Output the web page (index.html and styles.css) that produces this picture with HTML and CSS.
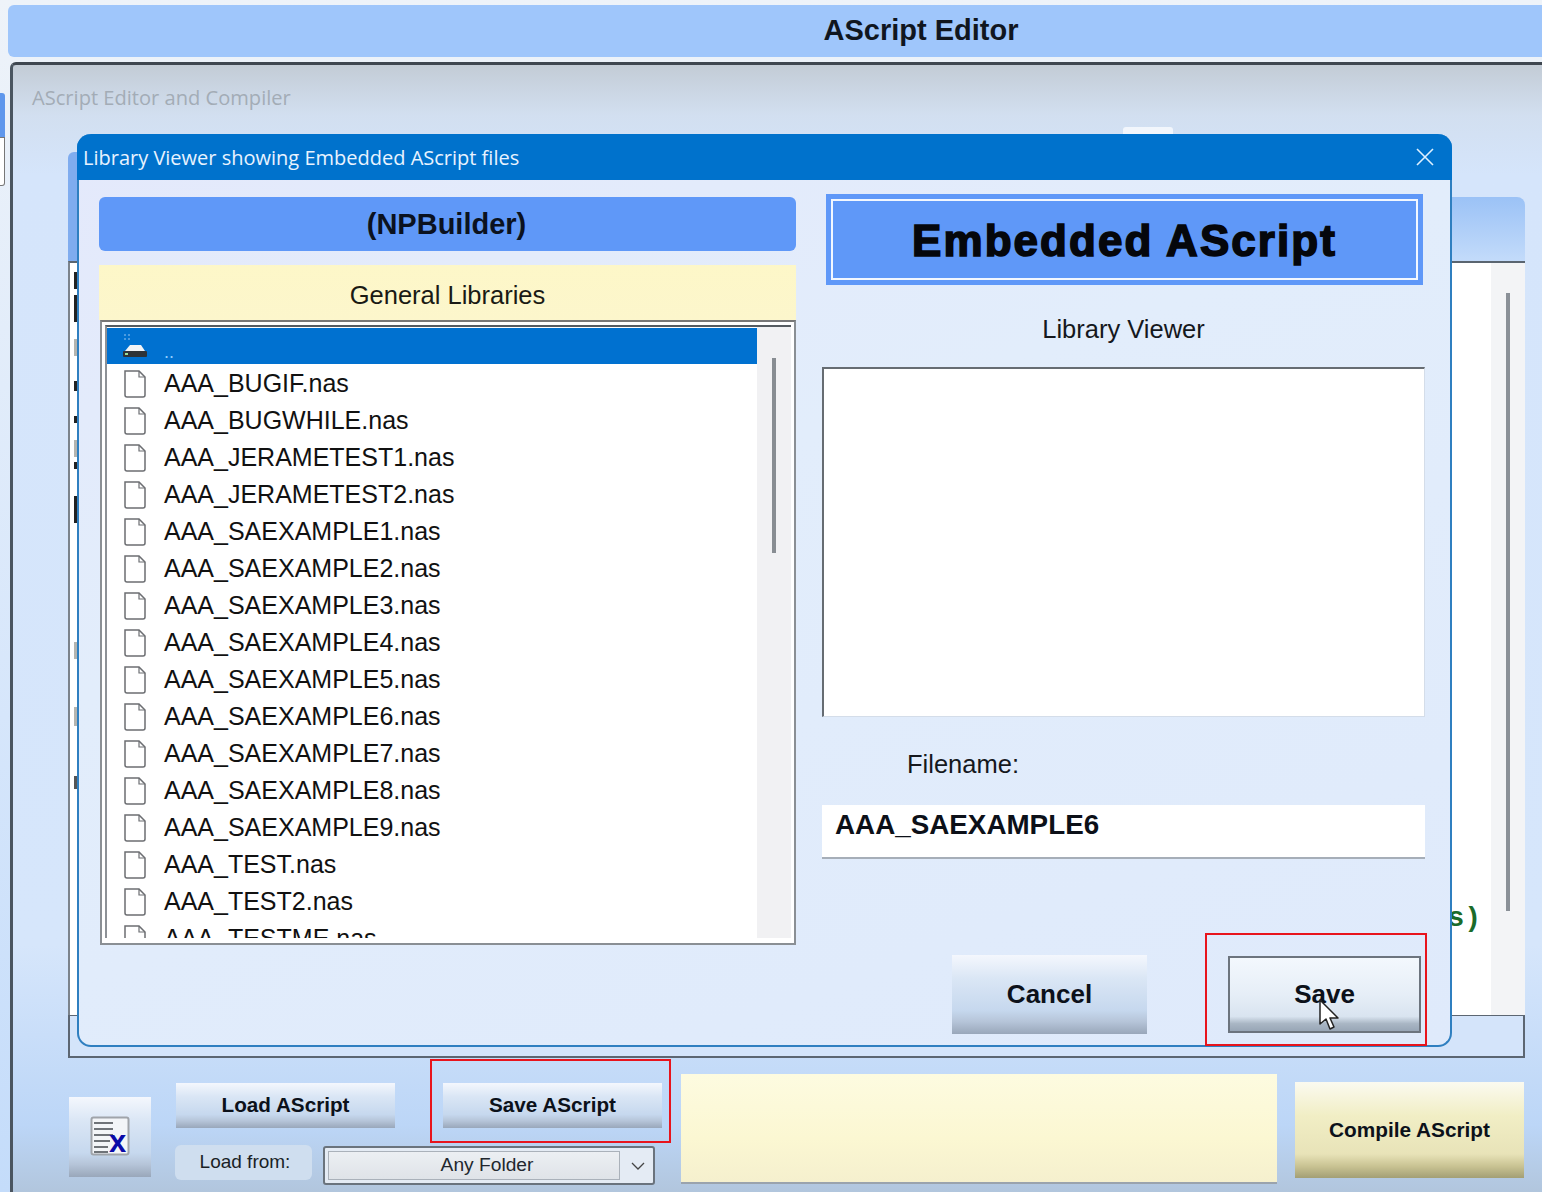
FILE: index.html
```html
<!DOCTYPE html>
<html lang="en">
<head>
  <meta charset="UTF-8">
  <title>AScript Editor</title>
  <link rel="stylesheet" href="styles.css">
</head>
<body>
  <div class="side-tab"></div>
  <div class="side-white"></div>

  <header class="titlebar"><span>AScript Editor</span></header>

  <div class="app">
    <div class="caption">AScript Editor and Compiler</div>

    <div class="tab-white"></div>
    <div class="tab-blue"></div>

    <section class="editor">
      <div class="editor-head"></div>
      <div class="editor-body">
        <div class="code-marks">
          <i></i><i></i><i></i><i></i><i></i><i></i><i></i><i></i><i></i><i></i><i></i>
        </div>
        <div class="code-end">s)</div>
        <div class="editor-scroll"></div>
      </div>
      <div class="editor-foot"></div>
    </section>

    <div class="toolbar">
      <button class="btn btn-icon" aria-label="Clear">
        <svg width="42" height="46" viewBox="0 0 42 46">
          <rect x="2.5" y="3.5" width="37" height="37" rx="2" fill="#f3f5f8" stroke="#a0a4aa" stroke-width="2"/>
          <path d="M5 9h19M5 15h19M5 21h19M5 27h16M5 33h14M5 38h14" stroke="#6f7378" stroke-width="2"/>
          <text x="20" y="38" class="icon-x">x</text>
        </svg>
      </button>

      <div class="load-save">
        <div class="load-save-row">
          <button class="btn btn-wide">Load AScript</button>
          <button class="btn btn-wide">Save AScript</button>
        </div>
        <div class="load-from">
          <span class="load-label">Load from:</span>
          <div class="combo">
            <span class="combo-value">Any Folder</span>
            <svg class="combo-arrow" width="14" height="8" viewBox="0 0 14 8"><path d="M1 1l6 6 6-6" fill="none" stroke="#444" stroke-width="1.3"/></svg>
          </div>
        </div>
      </div>

      <div class="status-panel"></div>
      <button class="btn btn-compile">Compile AScript</button>
    </div>
  </div>

  <div class="dialog">
    <div class="dialog-title">
      <span>Library Viewer showing Embedded AScript files</span>
      <svg width="18" height="18" viewBox="0 0 18 18"><path d="M1 1l16 16M17 1L1 17" stroke="#dff1ff" stroke-width="1.6"/></svg>
    </div>

    <div class="dialog-body">
      <div class="col-left">
        <div class="np-head">(NPBuilder)</div>
        <div class="lib-head">General Libraries</div>
        <div class="file-box">
          <div class="file-inner">
            <ul class="file-list">
              <li class="file selected">
                <svg class="file-icon" width="26" height="28" viewBox="0 0 26 28">
                  <path d="M3 19l5-6h11l4 6z" fill="#f2f4f6"/>
                  <rect x="1" y="19" width="24" height="6" rx="1" fill="#2e3338"/>
                  <rect x="3" y="21" width="3" height="2" fill="#9adf9a"/>
                  <path d="M2 2h2v2H2zM6 2h2v2H6zM2 6h2v2H2zM6 6h2v2H6z" fill="#4b9be0"/>
                </svg>
                <span class="dots">..</span>
              </li>
              <li class="file"><svg class="file-icon" width="26" height="28" viewBox="0 0 26 28"><use href="#doc"/></svg>AAA_BUGIF.nas</li>
              <li class="file"><svg class="file-icon" width="26" height="28" viewBox="0 0 26 28"><use href="#doc"/></svg>AAA_BUGWHILE.nas</li>
              <li class="file"><svg class="file-icon" width="26" height="28" viewBox="0 0 26 28"><use href="#doc"/></svg>AAA_JERAMETEST1.nas</li>
              <li class="file"><svg class="file-icon" width="26" height="28" viewBox="0 0 26 28"><use href="#doc"/></svg>AAA_JERAMETEST2.nas</li>
              <li class="file"><svg class="file-icon" width="26" height="28" viewBox="0 0 26 28"><use href="#doc"/></svg>AAA_SAEXAMPLE1.nas</li>
              <li class="file"><svg class="file-icon" width="26" height="28" viewBox="0 0 26 28"><use href="#doc"/></svg>AAA_SAEXAMPLE2.nas</li>
              <li class="file"><svg class="file-icon" width="26" height="28" viewBox="0 0 26 28"><use href="#doc"/></svg>AAA_SAEXAMPLE3.nas</li>
              <li class="file"><svg class="file-icon" width="26" height="28" viewBox="0 0 26 28"><use href="#doc"/></svg>AAA_SAEXAMPLE4.nas</li>
              <li class="file"><svg class="file-icon" width="26" height="28" viewBox="0 0 26 28"><use href="#doc"/></svg>AAA_SAEXAMPLE5.nas</li>
              <li class="file"><svg class="file-icon" width="26" height="28" viewBox="0 0 26 28"><use href="#doc"/></svg>AAA_SAEXAMPLE6.nas</li>
              <li class="file"><svg class="file-icon" width="26" height="28" viewBox="0 0 26 28"><use href="#doc"/></svg>AAA_SAEXAMPLE7.nas</li>
              <li class="file"><svg class="file-icon" width="26" height="28" viewBox="0 0 26 28"><use href="#doc"/></svg>AAA_SAEXAMPLE8.nas</li>
              <li class="file"><svg class="file-icon" width="26" height="28" viewBox="0 0 26 28"><use href="#doc"/></svg>AAA_SAEXAMPLE9.nas</li>
              <li class="file"><svg class="file-icon" width="26" height="28" viewBox="0 0 26 28"><use href="#doc"/></svg>AAA_TEST.nas</li>
              <li class="file"><svg class="file-icon" width="26" height="28" viewBox="0 0 26 28"><use href="#doc"/></svg>AAA_TEST2.nas</li>
              <li class="file"><svg class="file-icon" width="26" height="28" viewBox="0 0 26 28"><use href="#doc"/></svg>AAA_TESTME.nas</li>
            </ul>
            <div class="file-scroll"><div class="file-thumb"></div></div>
          </div>
        </div>
      </div>

      <div class="col-right">
        <div class="embed-head"><div class="embed-inner">Embedded AScript</div></div>
        <div class="viewer-label">Library Viewer</div>
        <div class="viewer"></div>
        <div class="filename-label">Filename:</div>
        <div class="filename">AAA_SAEXAMPLE6</div>
        <div class="dialog-actions">
          <button class="btn btn-dialog">Cancel</button>
          <button class="btn btn-dialog btn-focus">Save</button>
        </div>
      </div>
    </div>
  </div>

  <div class="mark mark-save"></div>
  <div class="mark mark-toolbar"></div>

  <svg class="cursor" width="24" height="32" viewBox="0 0 24 32">
    <path d="M2 1v24l6-5 4 10 4-2-4-9h8z" fill="#fff" stroke="#222" stroke-width="1.5" stroke-linejoin="round"/>
  </svg>

  <svg width="0" height="0" class="defs">
    <symbol id="doc" viewBox="0 0 26 28">
      <path d="M3 1h14l6 6v18a2 2 0 0 1-2 2H5a2 2 0 0 1-2-2z" fill="#fff" stroke="#6c6e72" stroke-width="1.5"/>
      <path d="M17 1v6h6" fill="none" stroke="#6c6e72" stroke-width="1.2"/>
    </symbol>
  </svg>
</body>
</html>
```

FILE: styles.css
```css
* {
  box-sizing: border-box;
}
html, body {
  margin: 0;
  height: 1192px;
  overflow: hidden;
}
body {
  position: relative;
  padding-top: 5px;
  font-family: "Liberation Sans", Arial, sans-serif;
  color: #000;
  background: linear-gradient(to bottom, #eef3f9 0, #d6e6fb 60%, #c4dcfa 100%);
}
button {
  font-family: inherit;
  border: none;
  padding: 0;
}

/* window title */
.titlebar {
  height: 52px;
  margin-left: 8px;
  border-radius: 6px 0 0 6px;
  background: #9fc6fb;
  display: flex;
  align-items: center;
  justify-content: center;
  padding: 0 8px 2px 300px;
  font-size: 29px;
  font-weight: bold;
  color: #10161f;
}
.side-tab {
  position: absolute;
  left: 0;
  top: 93px;
  width: 5px;
  height: 44px;
  background: #5f97ec;
  border-radius: 0 3px 0 0;
}
.side-white {
  position: absolute;
  left: 0;
  top: 137px;
  width: 5px;
  height: 49px;
  background: #fff;
  border: 1px solid #777;
  border-left: none;
  border-radius: 0 0 3px 0;
}

/* main window */
.app {
  position: relative;
  height: 1130px;
  margin-top: 5px;
  margin-left: 10px;
  padding-left: 55px;
  border-top: 3px solid #3f4750;
  border-left: 3px solid #4a5560;
  border-top-left-radius: 6px;
  background: linear-gradient(to bottom, #c3ccd6 0, #d2dff0 50px, #d5e5fb 110px, #d6e6fb 880px, #bcd6f7 1060px, #b1c5dc 1130px);
}
.caption {
  height: 132px;
  padding-top: 19px;
  margin-left: -36px;
  font-family: "Open Sans", sans-serif;
  font-size: 20.1px;
  color: #a3acb6;
}
.tab-white {
  position: absolute;
  left: 1110px;
  top: 62px;
  width: 50px;
  height: 10px;
  background: #f2f6fc;
  border-radius: 3px 3px 0 0;
}
.tab-blue {
  position: absolute;
  left: 55px;
  top: 87px;
  width: 12px;
  height: 110px;
  background: #7facef;
  border-radius: 6px 0 0 0;
}

/* editor behind the dialog */
.editor {
  width: 1457px;
  height: 861px;
  display: flex;
  flex-direction: column;
}
.editor-head {
  height: 64px;
  border-radius: 0 8px 0 0;
  background: linear-gradient(to bottom, #9bc2f6, #c3dbfa);
}
.editor-body {
  position: relative;
  flex: 1;
  background: #fff;
  border-top: 2px solid #5a6570;
  border-left: 2px solid #7b838c;
}
.editor-foot {
  height: 43px;
  background: #d4e4fa;
  border: 2px solid #5c6672;
  border-top-width: 1px;
}
.code-marks {
  padding-left: 4px;
}
.code-marks i {
  display: block;
  width: 3px;
  background: #222;
}
.code-marks i:nth-child(1) { margin-top: 9px; height: 17px; }
.code-marks i:nth-child(2) { margin-top: 6px; height: 27px; }
.code-marks i:nth-child(3) { margin-top: 17px; height: 17px; background: #b5b5b0; }
.code-marks i:nth-child(4) { margin-top: 25px; height: 10px; }
.code-marks i:nth-child(5) { margin-top: 25px; height: 7px; }
.code-marks i:nth-child(6) { margin-top: 17px; height: 17px; background: #b5b5b0; }
.code-marks i:nth-child(7) { margin-top: 5px; height: 7px; }
.code-marks i:nth-child(8) { margin-top: 27px; height: 27px; }
.code-marks i:nth-child(9) { margin-top: 119px; height: 17px; background: #b5b5b0; }
.code-marks i:nth-child(10) { margin-top: 48px; height: 19px; background: #b5b5b0; }
.code-marks i:nth-child(11) { margin-top: 50px; height: 13px; background: #555; }
.code-end {
  position: absolute;
  right: 44px;
  top: 640px;
  font-family: "Liberation Mono", monospace;
  font-weight: bold;
  font-size: 28px;
  color: #1b6b2a;
}
.editor-scroll {
  position: absolute;
  right: 0;
  top: 0;
  bottom: 0;
  width: 34px;
  background: #f3f4f6;
}
.editor-scroll::after {
  content: "";
  position: absolute;
  left: 15px;
  top: 30px;
  height: 618px;
  width: 4px;
  background: #8a9097;
}

/* bottom toolbar */
.toolbar {
  display: flex;
  align-items: flex-start;
  margin-left: 1px;
  height: 128px;
  padding-top: 16px;
}
.btn {
  display: block;
  flex: none;
  font-weight: bold;
  color: #0c111a;
  background: linear-gradient(to bottom, #f4f7fd 0, #dae6f5 30%, #c6d8ee 70%, #b6c5d9 84%, #99a7ba 100%);
}
.btn-icon {
  width: 82px;
  height: 80px;
  margin-top: 23px;
  padding-left: 20px;
  display: flex;
  align-items: center;
}
.icon-x {
  font-family: "Liberation Sans", sans-serif;
  font-weight: bold;
  font-size: 31px;
  fill: #0a0aa8;
}
.load-save {
  flex: none;
  margin-left: 25px;
  width: 486px;
}
.load-save-row {
  display: flex;
  gap: 48px;
  margin-top: 9px;
}
.btn-wide {
  width: 219px;
  height: 45px;
  padding-bottom: 2px;
  font-size: 20.7px;
}
.load-from {
  display: flex;
  align-items: flex-start;
  margin-top: 18px;
}
.load-label {
  width: 137px;
  height: 35px;
  margin-left: -1px;
  margin-top: -1px;
  padding-left: 3px;
  border-radius: 6px;
  background: #cfdeef;
  text-align: center;
  font-size: 19px;
  line-height: 33px;
  color: #1a1f26;
}
.combo {
  flex: none;
  width: 332px;
  height: 39px;
  margin-left: 11px;
  padding: 3px 33px 3px 3px;
  position: relative;
  border: 2px solid #6a737d;
  border-radius: 3px;
  background: #e4ebf4;
}
.combo-value {
  display: block;
  height: 100%;
  padding-left: 26px;
  text-align: center;
  font-size: 19.2px;
  line-height: 25px;
  color: #22272e;
  border: 1px solid #aab1ba;
  background: linear-gradient(to bottom, #eceff3, #dfe3e8);
}
.combo-arrow {
  position: absolute;
  right: 8px;
  top: 14px;
}
.status-panel {
  flex: none;
  width: 596px;
  height: 110px;
  margin-left: 19px;
  background: linear-gradient(to bottom, #fdfbe0, #fbf7d2 60%, #f5f0ce);
  border-bottom: 2px solid #9aa3ad;
}
.btn-compile {
  width: 229px;
  height: 96px;
  margin-left: 18px;
  margin-top: 8px;
  font-size: 20.8px;
  background: linear-gradient(to bottom, #fbfaf0 0, #f1eec5 35%, #e8e3b8 75%, #c8c292 88%, #a39f75 100%);
}

/* dialog */
.dialog {
  position: absolute;
  left: 77px;
  top: 134px;
  width: 1375px;
  height: 913px;
  border: 2px solid #2f7fc0;
  border-top: none;
  border-radius: 14px;
  background: linear-gradient(160deg, #e4e9fb 0, #e2edfb 40%, #dfeafb 100%);
}
.dialog-title {
  height: 46px;
  margin: 0 -2px;
  padding: 0 18px 0 6px;
  border-radius: 14px 14px 0 0;
  background: #0072cc;
  color: #e8f3ff;
  font-family: "Open Sans", sans-serif;
  font-size: 20px;
  display: flex;
  align-items: center;
  justify-content: space-between;
}
.dialog-body {
  display: flex;
  padding: 14px 0 0 20px;
}
.col-left {
  width: 697px;
  margin-right: 26px;
  padding-top: 3px;
}
.np-head {
  height: 54px;
  padding-right: 2px;
  border-radius: 6px;
  background: #5f98f8;
  text-align: center;
  font-size: 29px;
  font-weight: bold;
  line-height: 54px;
  color: #0b1220;
}
.lib-head {
  height: 55px;
  margin-top: 14px;
  background: linear-gradient(to bottom, #fdf7c8, #fcf6cc);
  text-align: center;
  font-size: 25.5px;
  line-height: 60px;
  color: #1a1a14;
}
.file-box {
  width: 696px;
  height: 625px;
  margin-left: 1px;
  padding: 3px 3px 5px;
  border: 2px solid #8a8f94;
  border-top-color: #777;
  background: #fff;
}
.file-inner {
  height: 100%;
  display: flex;
  border-top: 2px solid #555b61;
  border-left: 2px solid #8d9196;
}
.file-list {
  list-style: none;
  margin: 0;
  padding: 1px 0 0;
  width: 650px;
  overflow: hidden;
}
.file {
  height: 37px;
  padding: 2px 0 0 15px;
  display: flex;
  align-items: center;
  gap: 16px;
  font-size: 25px;
  color: #111;
}
.file.selected {
  height: 36px;
  padding-top: 0;
  background: #0071d0;
}
.file-icon {
  flex: none;
}
.dots {
  color: #8fd0ff;
  font-size: 18px;
  padding-top: 12px;
}
.file-scroll {
  flex: 1;
  background: #f1f1f3;
  position: relative;
}
.file-thumb {
  position: absolute;
  left: 15px;
  top: 31px;
  width: 4px;
  height: 195px;
  background: #888d92;
}
.col-right {
  width: 603px;
}
.embed-head {
  width: 597px;
  height: 91px;
  margin-left: 4px;
  border: 5px solid #5f98f8;
  background: #5f98f8;
}
.embed-inner {
  height: 100%;
  border: 2px solid #f2f7ff;
  text-align: center;
  font-size: 44px;
  font-weight: bold;
  line-height: 79px;
  letter-spacing: 2.05px;
  color: #05070c;
  -webkit-text-stroke: 1.6px #05070c;
}
.viewer-label {
  height: 82px;
  text-align: center;
  font-size: 25.5px;
  line-height: 88px;
  color: #15181d;
}
.viewer {
  height: 350px;
  background: #fff;
  border-top: 2px solid #666c72;
  border-left: 2px solid #666c72;
  border-right: 1px solid #d4dde9;
  border-bottom: 1px solid #d4dde9;
}
.filename-label {
  height: 88px;
  padding-left: 85px;
  font-size: 25.5px;
  line-height: 94px;
  color: #15181d;
}
.filename {
  height: 54px;
  background: #fff;
  padding-left: 13px;
  border-bottom: 2px solid #a6aeb8;
  font-size: 27.8px;
  font-weight: bold;
  line-height: 39px;
  color: #0c1018;
}
.dialog-actions {
  display: flex;
  gap: 81px;
  margin-top: 96px;
  padding-left: 130px;
}
.btn-dialog {
  width: 195px;
  height: 79px;
  font-size: 26px;
}
.btn-focus {
  width: 193px;
  height: 77px;
  margin-top: 1px;
  border: 2px solid #6c747e;
  background: linear-gradient(to bottom, #f3f8fd 0, #e6eef7 50%, #d9e4f0 80%, #a9b6c4 90%, #98a6b6 100%);
}

/* red highlights and pointer over the screenshot */
.mark {
  position: absolute;
  border: 2px solid #e8141c;
}
.mark-save {
  left: 1205px;
  top: 933px;
  width: 222px;
  height: 113px;
}
.mark-toolbar {
  left: 430px;
  top: 1059px;
  width: 241px;
  height: 84px;
}
.cursor {
  position: absolute;
  left: 1318px;
  top: 999px;
}
.defs {
  position: absolute;
}
```
